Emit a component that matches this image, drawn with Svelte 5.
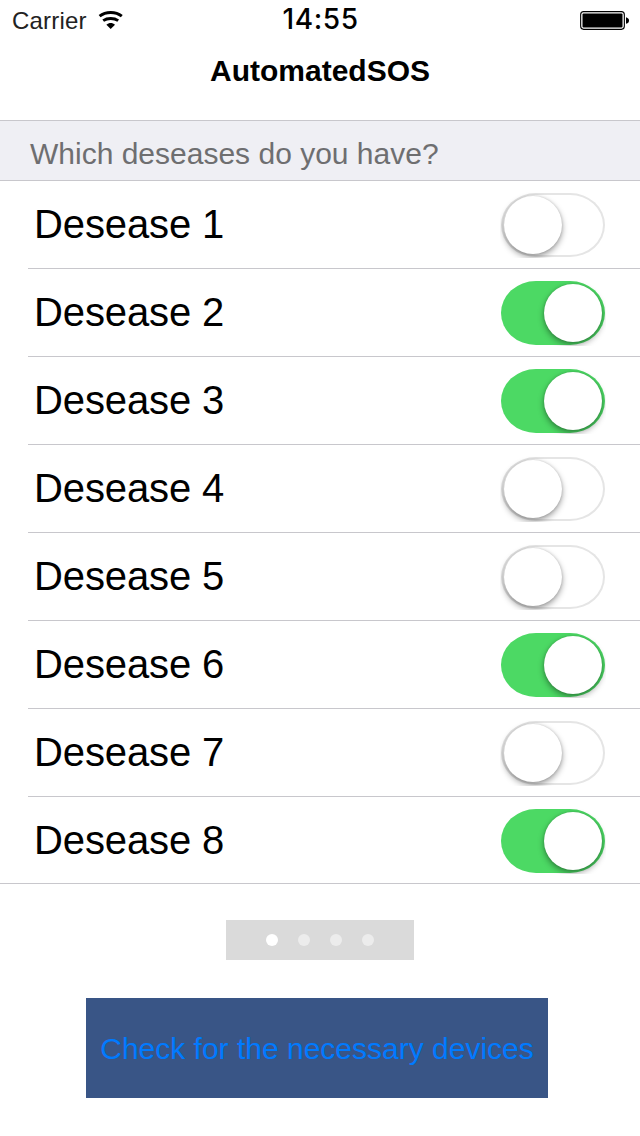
<script>
  let diseases = $state([false, true, true, false, false, true, false, true]);
  const dots = [0, 1, 2, 3];
  let page = $state(0);

  function toggle(i) {
    diseases[i] = !diseases[i];
  }
</script>

<div class="screen">
  <header class="status">
    <div class="carrier">
      <span class="name">Carrier</span>
      <svg width="26" height="20" viewBox="0 0 26 20" aria-hidden="true">
        <g fill="none" stroke="#000">
          <path stroke-width="3" d="M1.6 6.1C7.8 1.2 17.6 1.2 23.8 6.1" />
          <path stroke-width="2.9" d="M5.2 10.6C9.4 7.7 16 7.7 20.2 10.6" />
        </g>
        <path d="M8.4 14.7C11 12.4 14.4 12.4 17 14.7L12.7 18.9Z" />
      </svg>
    </div>
    <span class="time">14:55</span>
    <svg class="battery" width="50" height="20" viewBox="0 0 50 20" aria-hidden="true">
      <rect x=".65" y=".65" width="43.7" height="17.7" rx="3" fill="#fff" stroke="#000" stroke-width="1.1" />
      <rect x="2.5" y="2.4" width="40" height="14.2" rx="1" />
      <path d="M46 6.2C48.5 7 49 8 49 9.5S48.5 12 46 12.8Z" />
    </svg>
  </header>
  <h1>AutomatedSOS</h1>

  <h2>Which deseases do you have?</h2>
  <ul>
    {#each diseases as on, i}
      <li>
        <span class="label">Desease {i + 1}</span>
        <button class="switch" class:on role="switch" aria-checked={on} aria-label="Desease {i + 1}" onclick={() => toggle(i)}>
          <span class="track"><span class="knob"></span></span>
        </button>
      </li>
    {/each}
  </ul>

  <div class="pager">
    {#each dots as d}
      <i class:active={d === page}></i>
    {/each}
  </div>
  <button class="check"><span>Check for the necessary devices</span></button>
</div>

<style>
  :global(body) { margin: 0; background: #fff; }
  .screen {
    width: 640px;
    height: 1136px;
    overflow: hidden;
    background: #fff;
    color: #000;
    font-family: "Liberation Sans", Arial, sans-serif;
    display: flex;
    flex-direction: column;
  }
  .status {
    height: 40px;
    flex: none;
    display: grid;
    grid-template-columns: 1fr auto 1fr;
  }
  .carrier { display: flex; padding-left: 12px; }
  .name { font-size: 24px; line-height: 40px; letter-spacing: .2px; width: 86px; padding-top: 1px; color: #222; }
  .carrier svg { margin-top: 10px; }
  .time { font: 500 28px/38px Inter, sans-serif; letter-spacing: .6px; padding-left: 1px; }
  .battery { justify-self: end; margin: 11px 10px 0 0; }
  h1 { margin: 0; height: 80px; flex: none; text-align: center; font-size: 30px; line-height: 62px; font-weight: 700; }
  h2 {
    margin: 0;
    height: 61px;
    flex: none;
    box-sizing: border-box;
    padding-left: 30px;
    border-top: 1px solid #c8c7cc;
    border-bottom: 1px solid #c8c7cc;
    background: #efeff4;
    color: #6e6e70;
    font-size: 30px;
    line-height: 66px;
    font-weight: 400;
    overflow: hidden;
  }
  ul { list-style: none; margin: 0; padding: 0; height: 702px; border-bottom: 1px solid #c8c7cc; flex: none; }
  li {
    height: 87px;
    margin-left: 28px;
    padding: 0 34px 0 6px;
    border-bottom: 1px solid #c8c7cc;
    display: flex;
    align-items: flex-start;
    justify-content: space-between;
  }
  li:last-child { border: 0; }
  .label { font-size: 40px; line-height: 87px; letter-spacing: -.12px; }
  button { border: 0; padding: 0; margin: 0; font-family: inherit; }
  .switch {
    width: 106px;
    height: 66px;
    margin-top: 11px;
    padding: 0 1px;
    background: none;
    overflow: hidden;
    display: block;
  }
  .track {
    display: flex;
    box-sizing: border-box;
    width: 104px;
    height: 64px;
    padding: 3px;
    border-radius: 35px / 32px;
    box-shadow: inset 0 0 0 2px #e5e5e5;
  }
  .knob {
    width: 58px;
    height: 58px;
    border-radius: 50%;
    background: #fff;
    box-shadow: 0 3px 6px rgba(0, 0, 0, .38), 0 0 3px rgba(0, 0, 0, .16);
  }
  .on .track { background: #4cd964; box-shadow: none; justify-content: flex-end; }
  .pager {
    width: 188px;
    height: 40px;
    margin: 36px 0 0 226px;
    flex: none;
    background: #dadada;
    display: flex;
    align-items: center;
    justify-content: center;
    gap: 20px;
  }
  .pager i { width: 12px; height: 12px; border-radius: 50%; background: #ececec; }
  .pager .active { background: #fff; }
  .check {
    width: 462px;
    height: 100px;
    margin: 38px 0 0 86px;
    padding-top: 2px;
    flex: none;
    background: #395586;
    color: #007aff;
    font-size: 30px;
    line-height: 98px;
    white-space: nowrap;
  }
</style>
